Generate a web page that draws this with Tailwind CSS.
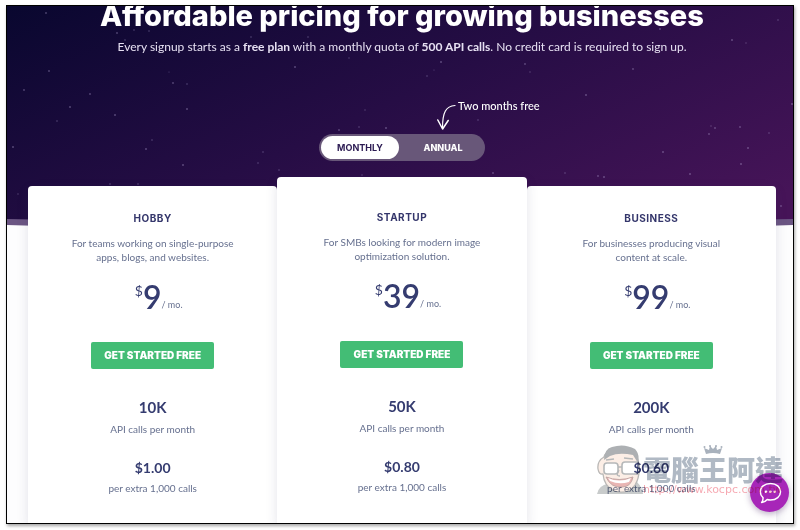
<!DOCTYPE html>
<html lang="en">
<head>
<meta charset="utf-8">
<meta name="viewport" content="width=device-width, initial-scale=1">
<title>Pricing</title>
<script src="https://cdn.jsdelivr.net/npm/@tailwindcss/browser@4"></script>
</head>
<body class="bg-white font-['Lato',sans-serif]">
<div class="flex min-h-screen flex-col px-1.5 pt-[5px] pb-1.5">
<main class="relative flex flex-1 flex-col overflow-hidden border border-black bg-[#fdfdfe] shadow-[1px_2px_3px_rgba(0,0,0,0.35)]">

  <!-- Night sky with curved lower edge -->
  <svg class="absolute inset-x-0 top-0 h-[222px] w-full" viewBox="0 0 786 222" preserveAspectRatio="none" aria-hidden="true">
    <defs>
      <linearGradient id="sky" gradientUnits="userSpaceOnUse" x1="0" y1="0" x2="207" y2="450">
        <stop offset="0" stop-color="#09072f"/>
        <stop offset="0.5" stop-color="#260d45"/>
        <stop offset="1" stop-color="#461458"/>
      </linearGradient>
    </defs>
    <path d="M0 0H786V219Q393 232 0 219Z" fill="#6b5683"/>
    <path d="M0 0H786V213Q393 222 0 213Z" fill="url(#sky)"/>
    <g fill="#b9a9d8" fill-opacity="0.38">
      <circle cx="39" cy="7" r="0.9"/><circle cx="42" cy="65" r="0.9"/><circle cx="17" cy="84" r="0.9"/><circle cx="83" cy="88" r="0.9"/><circle cx="63" cy="101" r="1"/><circle cx="50" cy="115" r="0.8"/><circle cx="108" cy="109" r="1"/><circle cx="6" cy="141" r="1"/><circle cx="110" cy="27" r="0.9"/><circle cx="118" cy="34" r="0.8"/><circle cx="127" cy="24" r="0.8"/><circle cx="142" cy="25" r="0.8"/><circle cx="162" cy="66" r="0.6"/><circle cx="166" cy="77" r="0.9"/><circle cx="180" cy="78" r="0.8"/><circle cx="180" cy="103" r="1"/><circle cx="145" cy="134" r="0.8"/><circle cx="139" cy="143" r="1"/><circle cx="176" cy="159" r="1"/><circle cx="256" cy="146" r="0.8"/><circle cx="251" cy="157" r="0.8"/><circle cx="272" cy="164" r="0.8"/><circle cx="288" cy="61" r="1"/><circle cx="301" cy="31" r="0.8"/><circle cx="244" cy="31" r="0.8"/><circle cx="358" cy="104" r="0.7"/><circle cx="332" cy="124" r="0.9"/><circle cx="352" cy="121" r="0.8"/><circle cx="379" cy="122" r="1"/><circle cx="11" cy="188" r="0.7"/><circle cx="103" cy="178" r="0.8"/><circle cx="131" cy="178" r="0.8"/><circle cx="342" cy="52" r="0.7"/><circle cx="355" cy="169" r="0.7"/>
      <circle cx="434" cy="56" r="1"/><circle cx="427" cy="64" r="0.6"/><circle cx="420" cy="70" r="0.8"/><circle cx="518" cy="58" r="0.9"/><circle cx="523" cy="66" r="0.7"/><circle cx="471" cy="114" r="0.8"/><circle cx="579" cy="89" r="1"/><circle cx="626" cy="63" r="0.9"/><circle cx="653" cy="23" r="0.9"/><circle cx="725" cy="34" r="1"/><circle cx="739" cy="37" r="0.7"/><circle cx="771" cy="14" r="0.8"/><circle cx="785" cy="98" r="1"/><circle cx="704" cy="120" r="0.7"/><circle cx="708" cy="122" r="0.9"/><circle cx="702" cy="128" r="0.9"/><circle cx="733" cy="121" r="0.9"/><circle cx="762" cy="127" r="0.8"/><circle cx="741" cy="142" r="1"/><circle cx="656" cy="146" r="1"/><circle cx="734" cy="158" r="1"/><circle cx="486" cy="167" r="0.9"/><circle cx="558" cy="167" r="0.8"/><circle cx="591" cy="170" r="0.9"/><circle cx="597" cy="171" r="1"/><circle cx="683" cy="168" r="1"/><circle cx="774" cy="200" r="0.9"/>
    </g>
  </svg>

  <header class="relative flex flex-col items-center pr-4 pl-5 text-center text-white">
    <h1 class="-mt-2 font-['Inter',sans-serif] text-[29px] leading-9 font-extrabold">Affordable pricing for growing businesses</h1>
    <p class="mt-[3px] text-[12px] leading-5 text-[#e6e0f2]">Every signup starts as a <strong>free plan</strong> with a monthly quota of <strong>500 API calls</strong>. No credit card is required to sign up.</p>
    <div class="relative mt-[77px] flex h-[27px] w-[166px] rounded-full bg-[#685779] p-0.5 font-['Inter',sans-serif] text-[9px]">
      <button type="button" aria-pressed="true" class="w-[78px] rounded-full bg-white font-bold text-[#2b1a52]">MONTHLY</button>
      <button type="button" aria-pressed="false" class="flex-1 pl-1 font-extrabold">ANNUAL</button>
      <div class="absolute bottom-full left-[118px] mb-[3px] flex items-start">
        <svg class="mt-1.5 h-[27px] w-[21px]" viewBox="0 0 21 27" fill="none" stroke="#fff" stroke-linecap="round" stroke-linejoin="round" aria-hidden="true"><path d="M18 1.500C9 2 5.500 8 5.500 24" stroke-width="1.200"/><path d="M.8 16L5.600 25L11.200 16.500" stroke-width="1.500"/></svg>
        <span class="font-['Lato',sans-serif] text-[11px] leading-4 font-medium whitespace-nowrap">Two months free</span>
      </div>
    </div>
  </header>

  <section class="relative mt-4 mr-[17px] ml-[21px] grid flex-1 grid-cols-3 text-center text-[#66708f]" aria-label="Plans">
    <article class="mt-[9px] flex flex-col items-center rounded-t-sm bg-white px-6 pt-6 shadow-[0_4px_12px_rgba(60,60,100,0.14)]">
      <h2 class="font-['Inter',sans-serif] text-[10px] leading-4 font-bold tracking-wider text-[#34366b]">HOBBY</h2>
      <p class="mt-2.5 text-[10px] leading-[14px]">For teams working on single-purpose<br>apps, blogs, and websites.</p>
      <p class="mt-[15px] flex h-9 pl-3 text-[#353c70]"><span class="mt-1 text-[14px] leading-4">$</span><span class="text-[32px] leading-9 font-semibold">9</span><span class="mt-5 text-[9px] leading-3 text-[#66708f]">/ mo.</span></p>
      <button type="button" class="mt-[27px] h-[27px] w-[123px] rounded-xs bg-[#43bd75] font-['Inter',sans-serif] text-[10px] font-black whitespace-nowrap text-white">GET STARTED FREE</button>
      <p class="mt-7 text-[15px] leading-5 font-bold text-[#353c70]">10K</p><p class="mt-1 text-[10px] leading-4">API calls per month</p>
      <p class="mt-[21px] text-[14px] leading-5 font-bold text-[#353c70]">$1.00</p><p class="mt-0.5 text-[10px] leading-4">per extra 1,000 calls</p>
    </article>
    <article class="z-10 flex flex-col items-center rounded-t-sm bg-white px-6 pt-8 shadow-[0_4px_12px_rgba(60,60,100,0.14)]">
      <h2 class="font-['Inter',sans-serif] text-[10px] leading-4 font-bold tracking-wider text-[#34366b]">STARTUP</h2>
      <p class="mt-2.5 text-[10px] leading-[14px]">For SMBs looking for modern image<br>optimization solution.</p>
      <p class="mt-[15px] flex h-9 pl-3 text-[#353c70]"><span class="mt-1 text-[14px] leading-4">$</span><span class="text-[32px] leading-9 font-semibold">39</span><span class="mt-5 text-[9px] leading-3 text-[#66708f]">/ mo.</span></p>
      <button type="button" class="mt-[27px] h-[27px] w-[123px] rounded-xs bg-[#43bd75] font-['Inter',sans-serif] text-[10px] font-black whitespace-nowrap text-white">GET STARTED FREE</button>
      <p class="mt-7 text-[15px] leading-5 font-bold text-[#353c70]">50K</p><p class="mt-1 text-[10px] leading-4">API calls per month</p>
      <p class="mt-[21px] text-[14px] leading-5 font-bold text-[#353c70]">$0.80</p><p class="mt-0.5 text-[10px] leading-4">per extra 1,000 calls</p>
    </article>
    <article class="mt-[9px] flex flex-col items-center rounded-t-sm bg-white px-6 pt-6 shadow-[0_4px_12px_rgba(60,60,100,0.14)]">
      <h2 class="font-['Inter',sans-serif] text-[10px] leading-4 font-bold tracking-wider text-[#34366b]">BUSINESS</h2>
      <p class="mt-2.5 text-[10px] leading-[14px]">For businesses producing visual<br>content at scale.</p>
      <p class="mt-[15px] flex h-9 pl-3 text-[#353c70]"><span class="mt-1 text-[14px] leading-4">$</span><span class="text-[32px] leading-9 font-semibold">99</span><span class="mt-5 text-[9px] leading-3 text-[#66708f]">/ mo.</span></p>
      <button type="button" class="mt-[27px] h-[27px] w-[123px] rounded-xs bg-[#43bd75] font-['Inter',sans-serif] text-[10px] font-black whitespace-nowrap text-white">GET STARTED FREE</button>
      <p class="mt-7 text-[15px] leading-5 font-bold text-[#353c70]">200K</p><p class="mt-1 text-[10px] leading-4">API calls per month</p>
      <p class="mt-[21px] text-[14px] leading-5 font-bold text-[#353c70]">$0.60</p><p class="mt-0.5 text-[10px] leading-4">per extra 1,000 calls</p>
    </article>
  </section>

  <button type="button" aria-label="Open chat" class="absolute right-1 bottom-[11px] z-20 flex size-[39px] items-center justify-center rounded-full bg-[#a726b8] shadow-[0_2px_6px_rgba(60,20,90,0.35)]">
    <svg class="size-6" viewBox="0 0 24 24" fill="none" stroke="#fff" stroke-width="1.500" stroke-linecap="round" stroke-linejoin="round" aria-hidden="true">
      <path d="M12.500 2.500C18.500 2.500 22.500 6 22.500 10.700S18.500 19 12.500 19C11.300 19 10.200 18.900 9.200 18.500C7.800 20.300 6 21.300 3.600 21.500C4.800 20.200 5.200 18.600 5 16.600C3.300 15.100 2.300 13 2.300 10.700C2.300 6 6.500 2.500 12.500 2.500Z"/>
      <g fill="#fff" stroke="none"><circle cx="8" cy="10.800" r="1.300"/><circle cx="12.400" cy="10.800" r="1.300"/><circle cx="16.800" cy="10.800" r="1.300"/></g>
    </svg>
  </button>

  <!-- Site watermark -->
  <div class="pointer-events-none absolute right-[10px] bottom-[27px] z-30 flex items-end mix-blend-multiply">
    <svg class="h-[52px] w-[48px] opacity-60" viewBox="0 0 48 52" stroke-linejoin="round" aria-hidden="true">
      <path d="M2 50Q4 41 13 40L42 38Q47 43 48 50Z" fill="#a3a8a8"/>
      <path d="M9 13Q2 17 3 25Q4 31 8 30Q9 42 19 47Q33 51 40 41Q45 33 44 21Q43 10 36 7L14 8Q10 9 9 13Z" fill="#fbe3d5" stroke="#8b8986" stroke-width="1.300"/>
      <path d="M9 16Q9 5 17 3Q29 -1 40 5Q45 10 43 19L38 11Q24 8 15 12Z" fill="#777c80"/>
      <rect x="9" y="19" width="14" height="11" rx="3" fill="#fff" stroke="#85898b" stroke-width="1.600"/>
      <rect x="27" y="18" width="17" height="12" rx="3" fill="#fff" stroke="#85898b" stroke-width="1.600"/>
      <path d="M23 23H27M11 16L19 15M29 14L38 15M24 26Q20 32 25 32" fill="none" stroke="#85898b" stroke-width="1.500"/>
      <path d="M11 33Q24 38 38 33Q36 43 27 43Q16 44 11 33Z" fill="#db8481" stroke="#9a6c69"/>
      <path d="M13 34Q24 39 36 34L34 38Q24 41 15 37Z" fill="#fff"/>
    </svg>
    <div class="relative flex flex-col whitespace-nowrap">
      <svg class="absolute -top-[9px] left-[60px] h-[9px] w-[20px]" viewBox="0 0 20 9" fill="#8b97a5" fill-opacity="0.75" aria-hidden="true"><path d="M3 9L1 3L6 5L7 1L10 4L13 1L14 5L19 3L17 9Q10 7 3 9Z"/><circle cx="1.500" cy="2" r="1"/><circle cx="7" cy="1" r="1"/><circle cx="13" cy="1" r="1"/><circle cx="18.500" cy="2" r="1"/></svg>
      <span lang="zh-Hant" class="font-['Noto_Sans_CJK_TC',sans-serif] text-[28px] leading-[30px] font-black text-[#7c8b9c]/60">電腦王阿達</span>
      <span class="h-3 w-[140px] font-['DejaVu_Sans',sans-serif] text-[11px] leading-3 text-[#f0707e]/60">http://www.kocpc.com.tw</span>
    </div>
  </div>
</main>
</div>
</body>
</html>
